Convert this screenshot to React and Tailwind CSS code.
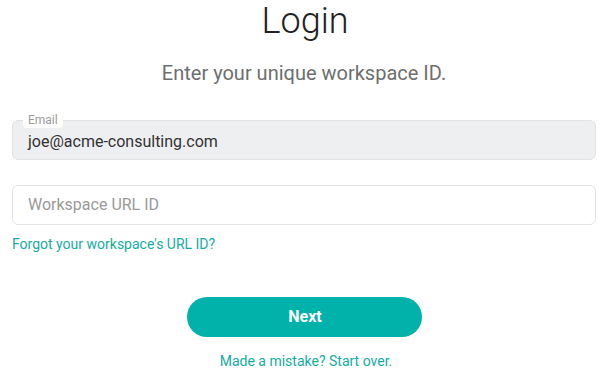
export default function App() {
  return (
    <div className="w-[608px] h-[374px] bg-white overflow-hidden flex flex-col font-['Roboto',sans-serif]">
      <h1 className="text-[36px] leading-[43px] font-light text-[#222] text-center pl-[2px]">Login</h1>
      <p className="mt-[16px] text-[20px] leading-[28px] text-[#6e6e6e] text-center">Enter your unique workspace ID.</p>
      <div className="mx-[12px] mt-[33px] relative h-[40px] rounded-[6px] border border-[#e2e3e5] bg-[#eeeff1] flex items-center px-[15px] pt-[3px]">
        <span className="absolute left-[10px] top-[-9px] px-[5px] bg-white rounded-[4px] text-[12px] leading-[16px] text-[#9b9b9b]">Email</span>
        <span className="text-[16px] text-[#333]">joe@acme-consulting.com</span>
      </div>
      <div className="mx-[12px] mt-[25px] h-[40px] rounded-[6px] border border-[#e2e3e5] bg-white flex items-center px-[15px]">
        <span className="text-[16px] text-[#9a9a9a]">Workspace URL ID</span>
      </div>
      <a className="mx-[12px] mt-[10px] text-[14px] leading-[18px] text-[#14aca2] self-start">Forgot your workspace's URL ID?</a>
      <button className="mt-[44px] self-center w-[235px] h-[40px] rounded-full bg-[#00b2a9] text-white text-[16px] font-bold pl-[2px]">Next</button>
      <p className="mt-[14px] text-[14px] leading-[20px] text-[#14aca2] text-center pl-[4px]">Made a mistake? Start over.</p>
    </div>
  );
}
